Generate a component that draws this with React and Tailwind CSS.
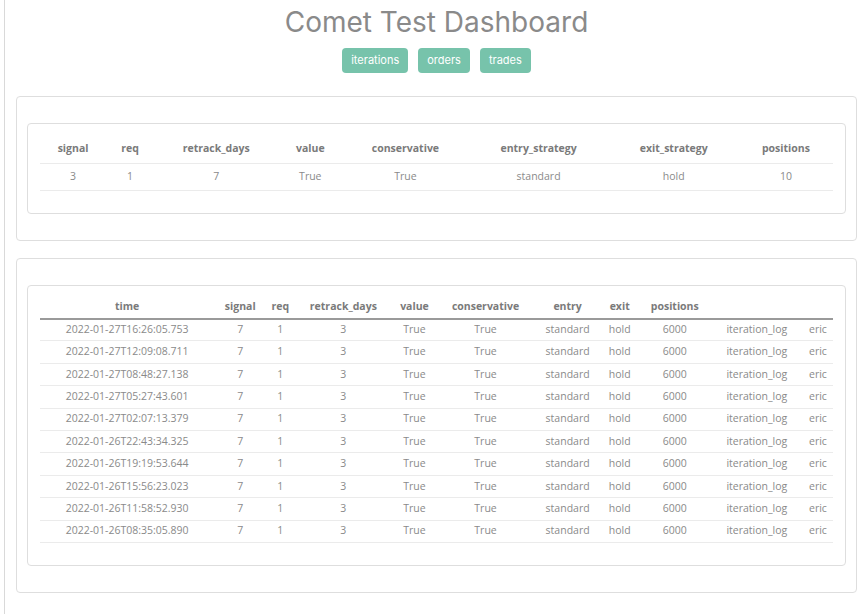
import React from "react";

const summaryCols = [
  { key: "signal", w: 66 },
  { key: "req", w: 48 },
  { key: "retrack_days", w: 124 },
  { key: "value", w: 64 },
  { key: "conservative", w: 126 },
  { key: "entry_strategy", w: 140 },
  { key: "exit_strategy", w: 130 },
  { key: "positions", w: 94 },
];

const summaryRow = ["3", "1", "7", "True", "True", "standard", "hold", "10"];

const logCols = [
  { key: "time", w: 174 },
  { key: "signal", w: 52 },
  { key: "req", w: 28 },
  { key: "retrack_days", w: 98 },
  { key: "value", w: 44 },
  { key: "conservative", w: 98 },
  { key: "entry", w: 66 },
  { key: "exit", w: 38 },
  { key: "positions", w: 72 },
  { key: "", w: 92 },
  { key: "", w: 30 },
];

const times = [
  "2022-01-27T16:26:05.753",
  "2022-01-27T12:09:08.711",
  "2022-01-27T08:48:27.138",
  "2022-01-27T05:27:43.601",
  "2022-01-27T02:07:13.379",
  "2022-01-26T22:43:34.325",
  "2022-01-26T19:19:53.644",
  "2022-01-26T15:56:23.023",
  "2022-01-26T11:58:52.930",
  "2022-01-26T08:35:05.890",
];

const logRows = times.map((t) => [t, "7", "1", "3", "True", "True", "standard", "hold", "6000", "iteration_log", "eric"]);

const tableFont = { fontFamily: '"Open Sans", "Noto Sans", sans-serif' };

function Card({ children }) {
  return (
    <section className="rounded-[4px] border border-[#dedede] bg-white px-[10px] py-[26px]">
      <div className="rounded-[4px] border border-[#dedede] px-[12px] pt-[11px] pb-[22px]">{children}</div>
    </section>
  );
}

export default function App() {
  return (
    <div className="min-h-[614px] w-[867px] bg-white">
      <div className="ml-[4px] min-h-[614px] border-l border-[#d9d9d9] pl-[11px] pr-[10px]">
        <header className="flex flex-col items-center pt-[4px]">
          <h1 className="text-[28px] leading-[36px] text-[#8a8a8a]" style={{ fontFamily: "Inter, sans-serif" }}>
            Comet Test Dashboard
          </h1>
          <nav className="mt-[8px] flex gap-[10px]" style={{ fontFamily: "Inter, sans-serif" }}>
            {["iterations", "orders", "trades"].map((b) => (
              <button key={b} className="h-[25px] rounded-[4px] bg-[#77c3ab] px-[9px] text-[11px] text-white">
                {b}
              </button>
            ))}
          </nav>
        </header>

        <div className="mt-[23px] flex flex-col gap-[17px]">
          <Card>
            <table className="w-full table-fixed text-center text-[10.5px] text-[#8a8a8a]" style={tableFont}>
              <colgroup>
                {summaryCols.map((c, i) => (
                  <col key={i} style={{ width: c.w }} />
                ))}
              </colgroup>
              <thead>
                <tr className="h-[28px] border-b border-[#ebebeb]">
                  {summaryCols.map((c) => (
                    <th key={c.key} className="font-bold text-[#7a7a7a]">{c.key}</th>
                  ))}
                </tr>
              </thead>
              <tbody>
                <tr className="h-[27px] border-b border-[#ebebeb]">
                  {summaryRow.map((v, i) => (
                    <td key={i}>{v}</td>
                  ))}
                </tr>
              </tbody>
            </table>
          </Card>

          <Card>
            <table className="w-full table-fixed text-center text-[10.5px] text-[#8a8a8a]" style={tableFont}>
              <colgroup>
                {logCols.map((c, i) => (
                  <col key={i} style={{ width: c.w }} />
                ))}
              </colgroup>
              <thead>
                <tr className="h-[22px] border-b-2 border-[#9a9a9a]">
                  {logCols.map((c, i) => (
                    <th key={i} className="font-bold text-[#7a7a7a]">{c.key}</th>
                  ))}
                </tr>
              </thead>
              <tbody>
                {logRows.map((row, r) => (
                  <tr key={r} className="h-[22.4px] border-b border-[#ebebeb]">
                    {row.map((v, i) => (
                      <td key={i}>{v}</td>
                    ))}
                  </tr>
                ))}
              </tbody>
            </table>
          </Card>
        </div>
      </div>
    </div>
  );
}
